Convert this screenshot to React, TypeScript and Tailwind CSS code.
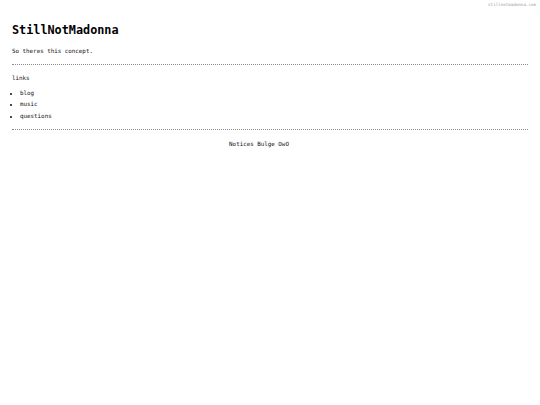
export default function App() {
  return (
    <div className="min-h-screen bg-white text-[#111] font-['DejaVu_Sans_Mono',monospace]">
      <div className="h-[10px] flex items-center justify-end pr-[4px] pt-[1px]">
        <span className="text-[4.2px] leading-none text-[#9a9a9a]">stillnotmadonna.com</span>
      </div>
      <main className="px-[12px]">
        <h1 className="mt-[12px] text-[11.8px] leading-[16px] font-bold text-black">StillNotMadonna</h1>
        <p className="mt-[8.5px] text-[5.85px] leading-[8px]">So theres this concept.</p>
        <hr className="mt-[9.5px] border-0 border-t border-dotted border-[#8a8a8a]" />
        <p className="mt-[9px] text-[5.85px] leading-[8px]">links</p>
        <ul className="mt-[5.5px] list-disc pl-[8px] text-[5.85px] leading-[11.5px]">
          <li>blog</li>
          <li>music</li>
          <li>questions</li>
        </ul>
        <hr className="mt-[7px] border-0 border-t border-dotted border-[#8a8a8a]" />
        <div className="mt-[10px] pr-[22px] text-center text-[5.85px] leading-[8px]">Notices Bulge OwO</div>
      </main>
    </div>
  );
}
